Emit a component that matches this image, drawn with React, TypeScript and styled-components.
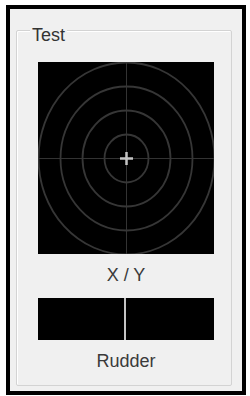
import React from 'react'
import styled, { createGlobalStyle } from 'styled-components'

const GlobalStyle = createGlobalStyle`
  html, body {
    margin: 0;
    padding: 0;
    background: #ffffff;
  }

  body {
    font-family: "Liberation Sans", Arial, sans-serif;
  }
`

const RINGS = [1, 2, 3, 4]

export default function App() {
  return (
    <>
      <GlobalStyle />
      <Frame>
        <GroupBox>
          <Caption>Test</Caption>
          <Pad>
            <svg width="176" height="192" viewBox="0 0 176 192">
              <rect x="0" y="0" width="176" height="192" fill="#000" />
              <line x1="88.5" y1="0" x2="88.5" y2="192" stroke="#333" strokeWidth="1" />
              <line x1="0" y1="96.5" x2="176" y2="96.5" stroke="#333" strokeWidth="1" />
              {RINGS.map(k => (
                <ellipse
                  key={k}
                  cx="88.5"
                  cy="96.5"
                  rx={22 * k}
                  ry={24 * k}
                  fill="none"
                  stroke="#363636"
                  strokeWidth="1.8"
                />
              ))}
              <line x1="82" y1="96.5" x2="95" y2="96.5" stroke="#c4c4c4" strokeWidth="2.5" />
              <line x1="88.5" y1="90" x2="88.5" y2="103" stroke="#c4c4c4" strokeWidth="2.5" />
            </svg>
          </Pad>
          <Label>X / Y</Label>
          <Rudder>
            <RudderHalf />
            <RudderHalf />
          </Rudder>
          <Label>Rudder</Label>
        </GroupBox>
      </Frame>
    </>
  )
}

const Frame = styled.div`
  box-sizing: border-box;
  margin: 5px 0 0 6px;
  width: 240px;
  height: 390px;
  border: 4px solid #000;
  background: #f0f0f0;
  padding: 21px 10px 5px 6px;
`

const GroupBox = styled.div`
  position: relative;
  box-sizing: border-box;
  height: 100%;
  border: 1px solid #d3d3d3;
  box-shadow: inset 1px 1px 0 #ffffff;
  border-radius: 2px;
  padding: 31px 0 0 21px;
  display: flex;
  flex-direction: column;
  align-items: flex-start;
`

const Caption = styled.span`
  position: absolute;
  top: -5px;
  left: 13px;
  padding: 0 2px;
  background: #f0f0f0;
  font-size: 18px;
  line-height: 18px;
  color: #333;
`

const Pad = styled.div`
  width: 176px;
  height: 192px;
  line-height: 0;
`

const Label = styled.div`
  width: 176px;
  margin-top: 12px;
  text-align: center;
  font-size: 18px;
  line-height: 18px;
  color: #3a3a3a;
`

const Rudder = styled.div`
  margin-top: 14px;
  width: 176px;
  height: 42px;
  display: grid;
  grid-template-columns: 86px 88px;
  column-gap: 2px;
  background: #c4c4c4;
`

const RudderHalf = styled.div`
  background: #000;
`
